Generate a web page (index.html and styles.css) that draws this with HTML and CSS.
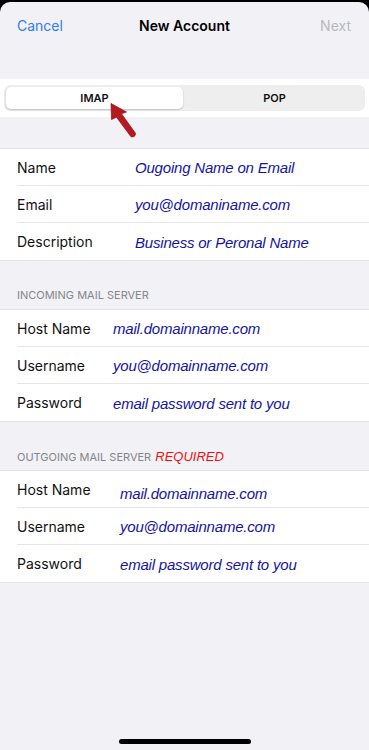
FILE: index.html
```html
<!DOCTYPE html>
<html lang="en">
<head>
    <meta charset="UTF-8">
    <title>New Account</title>
    <link rel="stylesheet" href="styles.css">
</head>
<body>
    <div class="sheet">
        <div class="navbar">
            <span class="nav-cancel">Cancel</span>
            <span class="nav-title">New Account</span>
            <span class="nav-next">Next</span>
        </div>

        <div class="segment-band">
            <div class="segment">
                <div class="segment-item selected">IMAP</div>
                <div class="segment-item">POP</div>
            </div>
            <svg class="pointer" width="34" height="40" viewBox="0 0 34 40">
                <path d="M5 2.5 L20.5 11 L15.5 12.8 L29.5 32.3 Q29.5 36.5 25 35.8 L10.5 16.2 L5.5 18.5 Z" fill="#b51a20" stroke="#8a0f14" stroke-width="0.7" stroke-linejoin="round"/>
            </svg>
        </div>

        <div class="group group-account">
            <div class="row">
                <span class="label">Name</span>
                <span class="value">Ougoing Name on Email</span>
            </div>
            <div class="row">
                <span class="label">Email</span>
                <span class="value">you@domaniname.com</span>
            </div>
            <div class="row">
                <span class="label">Description</span>
                <span class="value">Business or Peronal Name</span>
            </div>
        </div>

        <div class="group-header">INCOMING MAIL SERVER</div>
        <div class="group group-incoming">
            <div class="row">
                <span class="label">Host Name</span>
                <span class="value">mail.domainname.com</span>
            </div>
            <div class="row">
                <span class="label">Username</span>
                <span class="value">you@domainname.com</span>
            </div>
            <div class="row">
                <span class="label">Password</span>
                <span class="value">email password sent to you</span>
            </div>
        </div>

        <div class="group-header">OUTGOING MAIL SERVER <span class="required">REQUIRED</span></div>
        <div class="group group-outgoing">
            <div class="row">
                <span class="label">Host Name</span>
                <span class="value lower">mail.domainname.com</span>
            </div>
            <div class="row">
                <span class="label">Username</span>
                <span class="value">you@domainname.com</span>
            </div>
            <div class="row">
                <span class="label">Password</span>
                <span class="value">email password sent to you</span>
            </div>
        </div>

        <div class="home-indicator"></div>
    </div>
</body>
</html>
```

FILE: styles.css
```css
body {
    margin: 0;
    background: #000;
    font-family: "Inter", "Liberation Sans", sans-serif;
}

.sheet {
    margin-top: 2px;
    height: 748px;
    background: #f1f1f6;
    border-radius: 10px 10px 0 0;
    display: flex;
    flex-direction: column;
    position: relative;
}

.navbar {
    height: 77px;
    display: grid;
    grid-template-columns: 1fr auto 1fr;
    padding: 14px 17px 0 17px;
    box-sizing: border-box;
    font-size: 14px;
    line-height: 20px;
}

.nav-cancel {
    color: #2f7cf6;
}

.nav-title {
    color: #000;
    font-weight: 600;
}

.nav-next {
    color: #b9b9bd;
    text-align: right;
    margin-right: 1px;
}

.segment-band {
    background: #fff;
    height: 38px;
    padding: 6px 4px;
    box-sizing: border-box;
    position: relative;
}

.segment {
    display: flex;
    height: 26px;
    background: #eeeeef;
    border-radius: 6px;
    padding: 2px;
    box-sizing: border-box;
}

.segment-item {
    flex: 1;
    display: flex;
    align-items: center;
    justify-content: center;
    font-size: 11px;
    font-weight: 600;
    color: #111;
}

.segment-item.selected {
    background: #fff;
    border-radius: 5px;
    box-shadow: 0 1px 2px rgba(0, 0, 0, 0.2);
    margin-right: 3px;
}

.pointer {
    position: absolute;
    left: 106px;
    top: 22px;
}

.group {
    background: #fff;
    border-top: 1px solid #e3e3e6;
    border-bottom: 1px solid #e3e3e6;
}

.group-account {
    margin-top: 31px;
}

.row {
    display: flex;
    align-items: center;
    height: 37px;
    margin-left: 17px;
    border-bottom: 1px solid #e6e6ea;
    box-sizing: border-box;
}

.row:last-child {
    border-bottom: none;
}

.label {
    font-size: 14px;
    color: #111;
    flex: none;
}

.group-account .label { width: 118px; }
.group-incoming .label { width: 96px; }
.group-outgoing .label { width: 103px; }

.value {
    font-family: "Liberation Sans", Arial, sans-serif;
    font-style: italic;
    font-size: 15px;
    letter-spacing: -0.2px;
    color: #1414a0;
    margin-top: 1px;
}

.value.lower {
    margin-top: 8px;
}

.group-header {
    height: 48px;
    box-sizing: border-box;
    padding: 28px 17px 0 17px;
    font-size: 11px;
    line-height: 13px;
    color: #86868b;
}

.required {
    font-family: "Liberation Sans", Arial, sans-serif;
    font-style: italic;
    font-size: 13px;
    color: #f01010;
    margin-left: 1px;
}

.home-indicator {
    position: absolute;
    left: 119px;
    bottom: 6px;
    width: 132px;
    height: 5px;
    border-radius: 3px;
    background: #000;
}
```
